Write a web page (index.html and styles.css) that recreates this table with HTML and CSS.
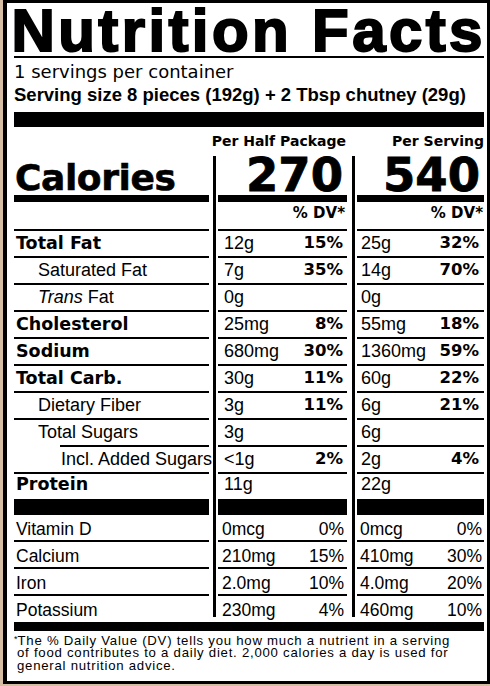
FILE: index.html
```html
<!DOCTYPE html>
<html lang="en">
<head>
    <meta charset="UTF-8">
    <meta name="viewport" content="width=device-width, initial-scale=1.0">
    <title>Nutrition Facts</title>
    <link rel="stylesheet" href="styles.css">
</head>
<body>
    <div class="label">
        <h1 class="title">Nutrition Facts</h1>
        <p class="servings">1 servings per container</p>
        <p class="serving-size">Serving size 8 pieces (192g) + 2 Tbsp chutney (29g)</p>
        <div class="bar bar-top"></div>

        <div class="col-heads">
            <span class="head head-half">Per Half Package</span>
            <span class="head head-serv">Per Serving</span>
        </div>

        <div class="facts">
            <div class="divider divider-a"></div>
            <div class="divider divider-b"></div>

            <div class="cell cal cal-label">Calories</div>
            <div class="cell cal cal-num mid">270</div>
            <div class="cell cal cal-num rgt">540</div>

            <div class="cell thick"></div>
            <div class="cell thick"></div>
            <div class="cell thick"></div>

            <div class="cell dv"></div>
            <div class="cell dv mid">% DV*</div>
            <div class="cell dv rgt">% DV*</div>

            <div class="cell name">Total Fat</div>
            <div class="cell val mid"><span>12g</span><b>15%</b></div>
            <div class="cell val rgt"><span>25g</span><b>32%</b></div>

            <div class="cell name-sub">Saturated Fat</div>
            <div class="cell val mid"><span>7g</span><b>35%</b></div>
            <div class="cell val rgt"><span>14g</span><b>70%</b></div>

            <div class="cell name-sub"><i>Trans</i> Fat</div>
            <div class="cell val mid"><span>0g</span></div>
            <div class="cell val rgt"><span>0g</span></div>

            <div class="cell name">Cholesterol</div>
            <div class="cell val mid"><span>25mg</span><b>8%</b></div>
            <div class="cell val rgt"><span>55mg</span><b>18%</b></div>

            <div class="cell name">Sodium</div>
            <div class="cell val mid"><span>680mg</span><b>30%</b></div>
            <div class="cell val rgt"><span>1360mg</span><b>59%</b></div>

            <div class="cell name">Total Carb.</div>
            <div class="cell val mid"><span>30g</span><b>11%</b></div>
            <div class="cell val rgt"><span>60g</span><b>22%</b></div>

            <div class="cell name-sub">Dietary Fiber</div>
            <div class="cell val mid"><span>3g</span><b>11%</b></div>
            <div class="cell val rgt"><span>6g</span><b>21%</b></div>

            <div class="cell name-sub rule-indent">Total Sugars</div>
            <div class="cell val mid"><span>3g</span></div>
            <div class="cell val rgt"><span>6g</span></div>

            <div class="cell name-sub2">Incl. Added Sugars</div>
            <div class="cell val mid"><span>&lt;1g</span><b>2%</b></div>
            <div class="cell val rgt"><span>2g</span><b>4%</b></div>

            <div class="cell name last">Protein</div>
            <div class="cell val mid last"><span>11g</span></div>
            <div class="cell val rgt last"><span>22g</span></div>

            <div class="cell thick thick-lg"></div>
            <div class="cell thick thick-lg"></div>
            <div class="cell thick thick-lg"></div>

            <div class="cell vit vit-name">Vitamin D</div>
            <div class="cell vit val mid"><span>0mcg</span><span>0%</span></div>
            <div class="cell vit val rgt"><span>0mcg</span><span>0%</span></div>

            <div class="cell vit vit-name">Calcium</div>
            <div class="cell vit val mid"><span>210mg</span><span>15%</span></div>
            <div class="cell vit val rgt"><span>410mg</span><span>30%</span></div>

            <div class="cell vit vit-name">Iron</div>
            <div class="cell vit val mid"><span>2.0mg</span><span>10%</span></div>
            <div class="cell vit val rgt"><span>4.0mg</span><span>20%</span></div>

            <div class="cell vit vit-name last">Potassium</div>
            <div class="cell vit val mid last"><span>230mg</span><span>4%</span></div>
            <div class="cell vit val rgt last"><span>460mg</span><span>10%</span></div>
        </div>

        <div class="bar bar-foot"></div>
        <p class="footnote"><sup>*</sup>The % Daily Value (DV) tells you how much a nutrient in a serving<br>of food contributes to a daily diet. 2,000 calories a day is used for<br>general nutrition advice.</p>
    </div>
</body>
</html>
```

FILE: styles.css
```css
body {
    margin: 0;
    background-color: #d6bea4;
    font-family: "Liberation Sans", Arial, sans-serif;
    color: #000;
}
.label {
    margin-left: 3px;
    width: 470px;
    background: #fff;
    border: 3px solid #000;
    border-left-width: 4px;
    padding: 0 3px 9px 7px;
}
.title {
    margin: 0;
    padding-top: 3px;
    font-size: 60px;
    line-height: 50px;
    font-weight: bold;
    letter-spacing: 3.4px;
    text-indent: -2.5px;
    -webkit-text-stroke: 2px #000;
    white-space: nowrap;
    border-bottom: 2px solid #000;
}
.servings {
    margin: 4px 0 0;
    font-family: "DejaVu Sans", sans-serif;
    font-size: 18px;
    line-height: 20px;
}
.serving-size {
    margin: 1.5px 0 0;
    font-size: 18.5px;
    line-height: 22px;
    font-weight: bold;
    white-space: nowrap;
}
.bar {
    background: #000;
}
.bar-top {
    margin-top: 6.5px;
    height: 15px;
}
.bar-foot {
    margin-top: 1px;
    height: 9px;
}
.col-heads {
    display: grid;
    grid-template-columns: 195px 9px 129px 10px 1fr;
    margin: 6px 0 7px;
    font-family: "DejaVu Sans", sans-serif;
    font-weight: bold;
    font-size: 14px;
    line-height: 16px;
}
.head {
    display: flex;
    justify-content: flex-end;
    white-space: nowrap;
}
.head-half {
    grid-column: 3;
    padding-right: 1px;
}
.head-serv {
    grid-column: 5;
}

/* main table */
.facts {
    display: grid;
    grid-template-columns: 195px 9px 129px 10px 1fr;
}
.divider {
    grid-row: 1 / span 18;
    width: 3px;
    margin-bottom: 4px;
    background: #000;
}
.divider-a {
    grid-column: 2;
    margin-left: 4px;
}
.divider-b {
    grid-column: 4;
    margin-left: 5px;
}
.cell {
    box-sizing: border-box;
    height: 27px;
    padding-top: 2px;
    border-bottom: 2px solid #000;
    font-size: 18px;
    line-height: 20px;
    white-space: nowrap;
}
.cal {
    height: 39px;
    border-bottom: 0;
    font-family: "DejaVu Sans", sans-serif;
    font-weight: bold;
}
.cal-label {
    padding: 4px 0 0 1px;
    font-size: 36px;
    line-height: 36px;
    letter-spacing: -0.4px;
    -webkit-text-stroke: 0.6px #000;
}
.cal-num {
    padding-top: 1px;
    text-align: right;
    font-size: 46.5px;
    line-height: 36px;
    -webkit-text-stroke: 0.8px #000;
}
.cal-num.mid {
    padding-right: 4px;
}
.cal-num.rgt {
    padding-right: 4px;
}
.thick {
    height: 7px;
    padding: 0;
    border: 0;
    background: #000;
}
.thick-lg {
    height: 16px;
}
.dv {
    height: 29px;
    padding-top: 1px;
    text-align: right;
    font-family: "DejaVu Sans", sans-serif;
    font-weight: bold;
    font-size: 15px;
}
.dv.mid {
    padding-right: 2px;
}
.dv.rgt {
    padding-right: 1px;
}
.name {
    padding-left: 2px;
    font-family: "DejaVu Sans", sans-serif;
    font-weight: bold;
    font-size: 17.5px;
}
.name-sub {
    padding-left: 24px;
}
.name-sub2 {
    padding-left: 47px;
}
.rule-indent {
    border-bottom-color: transparent;
    background: linear-gradient(#000, #000) no-repeat right bottom / calc(100% - 46px) 2px;
    background-origin: border-box;
}
.val {
    display: flex;
    justify-content: space-between;
}
.val.mid {
    padding-left: 6px;
    padding-right: 4px;
}
.val.rgt {
    padding-left: 4px;
    padding-right: 5px;
}
.val b {
    font-family: "DejaVu Sans", sans-serif;
    font-size: 16.5px;
}
.last {
    height: 25px;
    padding-top: 0;
    border-bottom: 0;
}
.name.last {
    padding-top: 0;
}
.vit {
    padding-top: 4px;
    font-size: 17.5px;
}
.vit-name {
    padding-left: 2px;
}
.vit.val.mid {
    padding-left: 4px;
    padding-right: 3px;
}
.vit.val.rgt {
    padding-left: 3px;
    padding-right: 2px;
}
.vit.last {
    padding-top: 4px;
}
.footnote {
    margin: 3.9px 0 0;
    padding-left: 3px;
    text-indent: -3px;
    font-size: 13.2px;
    line-height: 12.5px;
    letter-spacing: 0.75px;
    white-space: nowrap;
}
.footnote sup {
    font-size: 9px;
    line-height: 0;
    vertical-align: 3px;
    letter-spacing: 0;
}
```
